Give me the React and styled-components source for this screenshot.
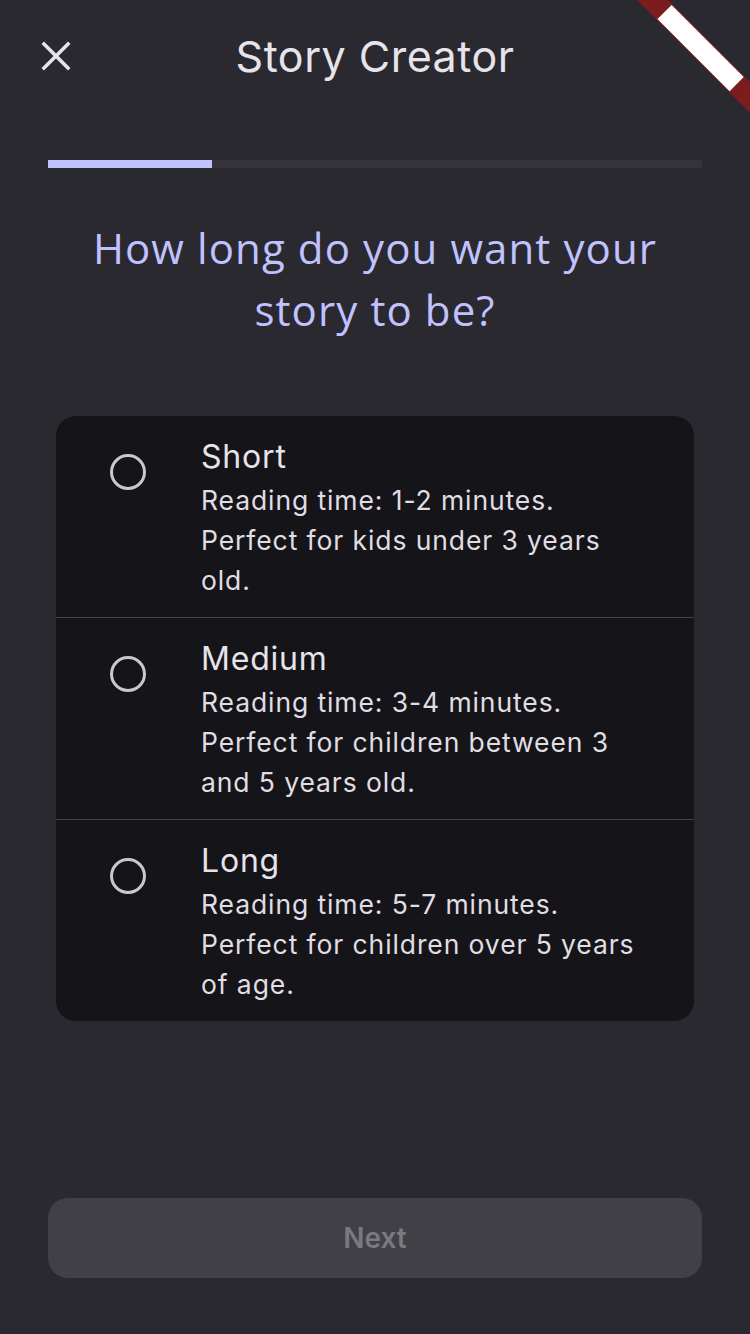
import React, { useState } from "react";
import styled, { createGlobalStyle } from "styled-components";

const GlobalStyle = createGlobalStyle`
  * {
    margin: 0;
    padding: 0;
    box-sizing: border-box;
  }
  body {
    background: #2a2930;
    font-family: "Inter", "Roboto", sans-serif;
  }
`;

const Screen = styled.div`
  position: relative;
  width: 750px;
  height: 1334px;
  display: flex;
  flex-direction: column;
  background: #2a2930;
  overflow: hidden;
`;

const Header = styled.header`
  height: 112px;
  display: flex;
  align-items: center;
  justify-content: center;
  position: relative;
`;

const CloseButton = styled.button`
  position: absolute;
  left: 36px;
  top: 36px;
  width: 40px;
  height: 40px;
  border: none;
  background: none;
  display: flex;
  align-items: center;
  justify-content: center;
  cursor: pointer;
`;

const Title = styled.h1`
  font-family: "Inter", sans-serif;
  font-weight: 400;
  font-size: 43px;
  color: #e6e4ea;
  letter-spacing: 0.5px;
`;

const Progress = styled.div`
  margin: 48px 48px 0;
  height: 8px;
  background: #34333a;
`;

const ProgressFill = styled.div`
  height: 100%;
  background: #c0c1ff;
`;

const Question = styled.h2`
  margin: 49px 60px 0;
  text-align: center;
  font-family: "Open Sans", "Lato", sans-serif;
  font-weight: 500;
  font-size: 42px;
  line-height: 62px;
  letter-spacing: 1.1px;
  color: #c0c1ff;
`;

const Card = styled.div`
  margin: 75px 56px 0;
  background: #151419;
  border-radius: 20px;
  overflow: hidden;
`;

const Option = styled.label`
  display: flex;
  padding: 21px 43px 17px 54px;
  cursor: pointer;
  & + & {
    border-top: 1px solid #45444b;
  }
`;

const Radio = styled.span`
  flex: none;
  width: 36px;
  height: 36px;
  margin-top: 17px;
  margin-right: 55px;
  border-radius: 50%;
  border: 3px solid ${(p) => (p.checked ? "#c0c1ff" : "#cac8ce")};
  display: flex;
  align-items: center;
  justify-content: center;
  &::after {
    content: "";
    width: 16px;
    height: 16px;
    border-radius: 50%;
    background: #c0c1ff;
    display: ${(p) => (p.checked ? "block" : "none")};
  }
`;

const OptionText = styled.div`
  display: flex;
  flex-direction: column;
`;

const OptionTitle = styled.div`
  font-size: 32px;
  line-height: 40px;
  color: #e6e4ea;
  letter-spacing: 0.8px;
  margin-bottom: 3px;
`;

const OptionDesc = styled.div`
  font-size: 26.5px;
  line-height: 40px;
  color: #e0dee4;
  letter-spacing: 0.9px;
`;

const Spacer = styled.div`
  flex: 1;
`;

const NextButton = styled.button`
  margin: 0 48px 56px;
  height: 80px;
  border: none;
  border-radius: 20px;
  background: #414046;
  color: #7a797f;
  font-family: "Inter", sans-serif;
  font-weight: 600;
  font-size: 28px;
`;

const Banner = styled.svg`
  position: absolute;
  top: 0;
  right: 0;
`;

const options = [
  {
    title: "Short",
    time: "Reading time: 1-2 minutes.",
    desc: "Perfect for kids under 3 years old.",
  },
  {
    title: "Medium",
    time: "Reading time: 3-4 minutes.",
    desc: "Perfect for children between 3 and 5 years old.",
  },
  {
    title: "Long",
    time: "Reading time: 5-7 minutes.",
    desc: "Perfect for children over 5 years of age.",
  },
];

const App = () => {
  const [selected, setSelected] = useState(null);

  return (
    <>
      <GlobalStyle />
      <Screen>
        <Header>
          <CloseButton aria-label="Close">
            <svg width="30" height="30" viewBox="0 0 30 30">
              <path
                d="M3 3 L27 27 M27 3 L3 27"
                stroke="#e6e4ea"
                strokeWidth="3.6"
                strokeLinecap="square"
              />
            </svg>
          </CloseButton>
          <Title>Story Creator</Title>
        </Header>
        <Progress>
          <ProgressFill style={{ width: "25%" }} />
        </Progress>
        <Question>How long do you want your story to be?</Question>
        <Card>
          {options.map((o, i) => (
            <Option key={o.title} onClick={() => setSelected(i)}>
              <Radio checked={selected === i} />
              <OptionText>
                <OptionTitle>{o.title}</OptionTitle>
                <OptionDesc>{o.time}</OptionDesc>
                <OptionDesc>{o.desc}</OptionDesc>
              </OptionText>
            </Option>
          ))}
        </Card>
        <Spacer />
        <NextButton disabled={selected === null}>Next</NextButton>
        <Banner width="130" height="120" viewBox="620 0 130 120">
          <g transform="translate(652.5 0) rotate(45)">
            <rect x="-20" y="-11" width="200" height="22" fill="#7d1c1e" />
            <rect x="17" y="-10" width="102" height="20" fill="#ffffff" />
          </g>
        </Banner>
      </Screen>
    </>
  );
};

export default App;
